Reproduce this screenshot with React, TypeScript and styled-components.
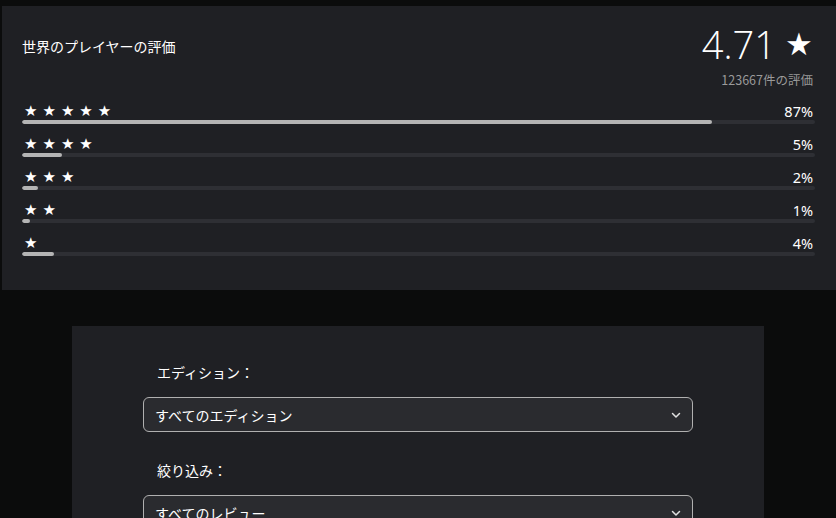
import styled, { createGlobalStyle } from "styled-components"

const GlobalStyle = createGlobalStyle`
    body {
        margin: 0;
        background: #0b0c0c;
        font-family: "Noto Sans", "Noto Sans CJK JP", sans-serif;
        color: #ffffff;
    }
`

const Page = styled.div`
    padding-top: 6px;
    display: flex;
    flex-direction: column;
    align-items: center;
    gap: 36px;
`

const RatingPanel = styled.section`
    box-sizing: border-box;
    width: calc(100% - 2px);
    margin-left: 2px;
    height: 284px;
    background: #1f2024;
    padding: 17px 21px 0 20px;
`

const Header = styled.div`
    display: flex;
    justify-content: space-between;
    align-items: flex-start;
    margin-bottom: 13px;
`

const Title = styled.h2`
    margin: 13px 0 0;
    font-size: 14px;
    font-weight: 400;
    font-family: "Noto Sans CJK JP", sans-serif;
`

const Score = styled.div`
    display: flex;
    flex-direction: column;
    align-items: flex-end;
    padding-right: 2px;
`

const Average = styled.div`
    font-family: "Open Sans", "Noto Sans", sans-serif;
    font-weight: 300;
    font-size: 38px;
    line-height: 42px;
    display: flex;
    align-items: center;
    gap: 9px;
`

const BigStar = styled.span`
    font-family: "DejaVu Sans", sans-serif;
    font-size: 31px;
    line-height: 1;
`

const Count = styled.div`
    margin-top: 5px;
    font-size: 12.5px;
    color: #9a9a9a;
    font-family: "Noto Sans CJK JP", sans-serif;
`

const Row = styled.div`
    margin-bottom: 11px;
`

const RowLabel = styled.div`
    display: flex;
    justify-content: space-between;
    align-items: center;
    height: 17px;
    font-size: 14.5px;
`

const Stars = styled.span`
    font-family: "DejaVu Sans", sans-serif;
    font-size: 15px;
    letter-spacing: 5px;
    padding-left: 2px;
`

const Percent = styled.span`
    padding-right: 2px;
`

const Track = styled.div`
    height: 4px;
    border-radius: 2px;
    background: #2e2f34;
    margin-top: 1px;
    overflow: hidden;
`

const Fill = styled.div`
    height: 100%;
    border-radius: 2px;
    background: #b4b4b4;
`

const FilterPanel = styled.section`
    box-sizing: border-box;
    width: 692px;
    background: #1f2024;
    padding: 36px 71px 40px;
    font-family: "Noto Sans CJK JP", sans-serif;
`

const Field = styled.div`
    margin-bottom: 28px;
`

const Label = styled.div`
    font-size: 14px;
    padding-left: 14px;
    margin-bottom: 15px;
`

const Select = styled.div`
    box-sizing: border-box;
    height: 35px;
    border: 1px solid #b0b0b0;
    border-radius: 6px;
    background: #2a2b2f;
    display: flex;
    align-items: center;
    justify-content: space-between;
    padding: 0 10px 0 11px;
    font-size: 14px;
`

const ratings = [
    { stars: 5, pct: 87 },
    { stars: 4, pct: 5 },
    { stars: 3, pct: 2 },
    { stars: 2, pct: 1 },
    { stars: 1, pct: 4 },
]

function Chevron() {
    return (
        <svg width="12" height="12" viewBox="0 0 12 12" fill="none">
            <path d="M2.5 4.5 L6 8 L9.5 4.5" stroke="#e0e0e0" strokeWidth="1.5" strokeLinecap="round" strokeLinejoin="round" />
        </svg>
    )
}

export default function App() {
    return (
        <>
            <GlobalStyle />
            <Page>
                <RatingPanel>
                    <Header>
                        <Title>世界のプレイヤーの評価</Title>
                        <Score>
                            <Average>
                                4.71 <BigStar>★</BigStar>
                            </Average>
                            <Count>123667件の評価</Count>
                        </Score>
                    </Header>
                    {ratings.map((r) => (
                        <Row key={r.stars}>
                            <RowLabel>
                                <Stars>{"★".repeat(r.stars)}</Stars>
                                <Percent>{r.pct}%</Percent>
                            </RowLabel>
                            <Track>
                                <Fill style={{ width: `${r.pct}%` }} />
                            </Track>
                        </Row>
                    ))}
                </RatingPanel>
                <FilterPanel>
                    <Field>
                        <Label>エディション：</Label>
                        <Select>
                            すべてのエディション
                            <Chevron />
                        </Select>
                    </Field>
                    <Field>
                        <Label>絞り込み：</Label>
                        <Select>
                            すべてのレビュー
                            <Chevron />
                        </Select>
                    </Field>
                </FilterPanel>
            </Page>
        </>
    )
}
